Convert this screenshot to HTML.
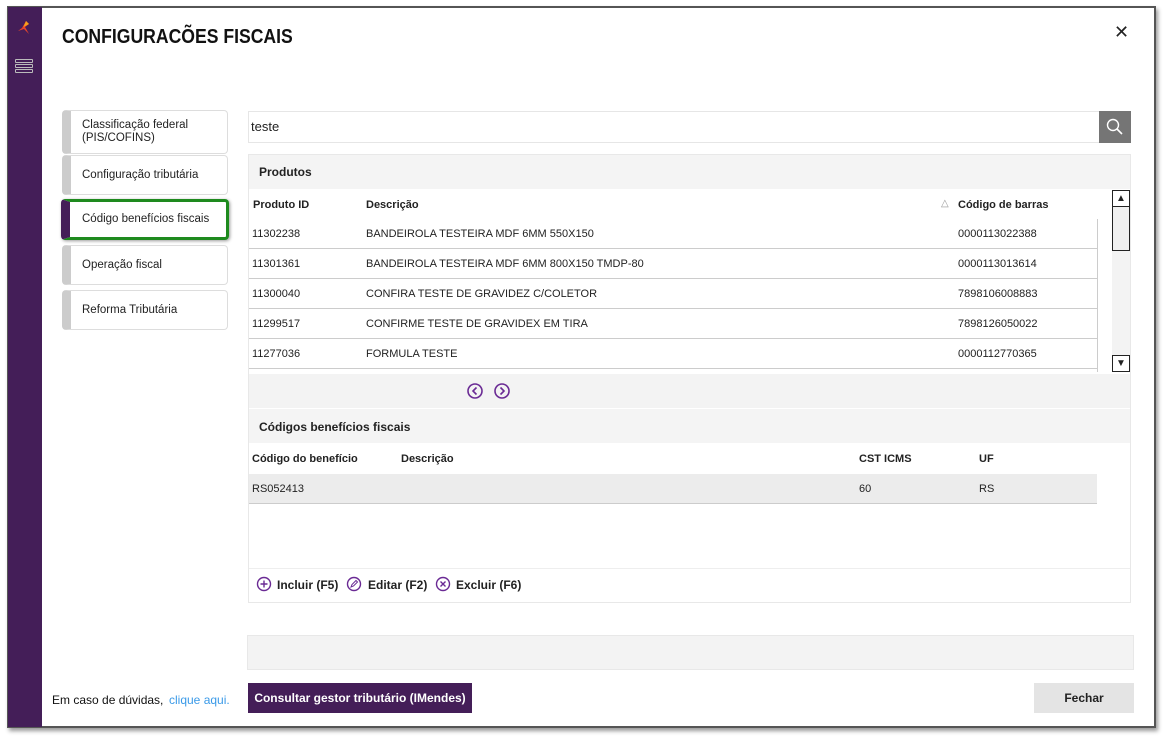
<!DOCTYPE html>
<html><head><meta charset="utf-8"><style>
*{margin:0;padding:0;box-sizing:border-box}
body{width:1163px;height:737px;background:#fff;font-family:"Liberation Sans",Arial,sans-serif;position:relative;overflow:hidden;font-size:12px;color:#222}
.a{position:absolute}
.win{left:7px;top:6px;width:1149px;height:722px;border:2px solid #555;box-shadow:2px 3px 4px #999;background:#fff}
.side{left:8px;top:7px;width:34px;height:720px;background:#441e58}
.tab{position:absolute;left:62px;width:166px;height:40px;border:1px solid #ddd;border-radius:4px;border-left:9px solid #ccc;padding-left:11px;display:flex;align-items:center;font-size:11.5px;color:#222;line-height:13px}
.row{position:absolute;left:249px;width:848px;height:30px;border-bottom:1px solid #ccc;font-size:11px;line-height:31px}
.row span{position:absolute}
.b{font-weight:bold}
.bar{position:absolute;left:15px;width:18px;height:4px;border:1px solid #bbb;border-radius:1px}
</style></head><body>
<div class="a win"></div>
<div class="a side"></div>
<svg class="a" style="left:16px;top:20px" width="16" height="16" viewBox="0 0 16 16"><path d="M10 1 L6 8 L2 11 L8 9 L13 14 L9 7 L13 4Z" fill="#e8452b"/><path d="M10 1 L7.5 7 L13 4Z" fill="#f7a21b"/></svg>
<div class="bar" style="top:59px"></div>
<div class="bar" style="top:64px"></div>
<div class="bar" style="top:69px"></div>
<div class="a b" style="left:62px;top:26px;font-size:20px;color:#111;transform:scaleX(.88);transform-origin:left">CONFIGURACÕES FISCAIS</div>
<div class="a" style="left:1114px;top:22px;font-size:18px;color:#222">✕</div>

<div class="tab" style="top:110px;height:44px">Classificação federal<br>(PIS/COFINS)</div>
<div class="tab" style="top:155px">Configuração tributária</div>
<div class="tab" style="top:199px;height:41px;border:3px solid #1e8a1e;border-left:9px solid #441e58;left:61px;width:168px;padding-left:12px;box-shadow:1px 1px 3px #999">Código benefícios fiscais</div>
<div class="tab" style="top:245px">Operação fiscal</div>
<div class="tab" style="top:290px">Reforma Tributária</div>

<div class="a" style="left:248px;top:111px;width:852px;height:32px;border:1px solid #e6e6e6;padding:7px 2px;font-size:13px">teste</div>
<div class="a" style="left:1099px;top:111px;width:32px;height:32px;background:#757575"></div>
<svg class="a" style="left:1105px;top:117px" width="20" height="20" viewBox="0 0 20 20"><circle cx="8" cy="8" r="5.5" fill="none" stroke="#fff" stroke-width="1.4"/><path d="M12 12 L17 17" stroke="#fff" stroke-width="1.6"/></svg>

<div class="a" style="left:248px;top:154px;width:883px;height:449px;border:1px solid #e8e8e8"></div>
<div class="a b" style="left:249px;top:155px;width:881px;height:34px;background:#f4f4f4;padding:10px 10px;font-size:12px">Produtos</div>
<div class="a b" style="left:253px;top:199px;font-size:11px">Produto ID</div>
<div class="a b" style="left:366px;top:199px;font-size:11px">Descrição</div>
<div class="a" style="left:941px;top:198px;font-size:10px;color:#999">△</div>
<div class="a b" style="left:958px;top:199px;font-size:11px">Código de barras</div>
<div class="a" style="left:1097px;top:219px;width:1px;height:153px;background:#ccc"></div>
<div class="row" style="top:219px"><span style="left:3px">11302238</span><span style="left:117px">BANDEIROLA TESTEIRA MDF 6MM 550X150</span><span style="left:709px">0000113022388</span></div>
<div class="row" style="top:249px"><span style="left:3px">11301361</span><span style="left:117px">BANDEIROLA TESTEIRA MDF 6MM 800X150 TMDP-80</span><span style="left:709px">0000113013614</span></div>
<div class="row" style="top:279px"><span style="left:3px">11300040</span><span style="left:117px">CONFIRA TESTE DE GRAVIDEZ C/COLETOR</span><span style="left:709px">7898106008883</span></div>
<div class="row" style="top:309px"><span style="left:3px">11299517</span><span style="left:117px">CONFIRME TESTE DE GRAVIDEX EM TIRA</span><span style="left:709px">7898126050022</span></div>
<div class="row" style="top:339px"><span style="left:3px">11277036</span><span style="left:117px">FORMULA TESTE</span><span style="left:709px">0000112770365</span></div>
<div class="a" style="left:1112px;top:190px;width:18px;height:182px;background:#f3f3f3"></div>
<div class="a" style="left:1112px;top:190px;width:18px;height:17px;border:1px solid #222;background:#fff;font-size:10px;text-align:center;line-height:15px">▲</div>
<div class="a" style="left:1112px;top:206px;width:18px;height:45px;border:1px solid #222;background:#f0f0f0"></div>
<div class="a" style="left:1112px;top:355px;width:18px;height:17px;border:1px solid #222;background:#fff;font-size:10px;text-align:center;line-height:15px">▼</div>
<div class="a" style="left:249px;top:374px;width:881px;height:34px;background:#f3f3f3"></div>
<svg class="a" style="left:466px;top:382px" width="46" height="18" viewBox="0 0 46 18"><circle cx="9" cy="9" r="7" fill="none" stroke="#6a2a94" stroke-width="1.6"/><path d="M10.5 5.5 L7 9 L10.5 12.5" fill="none" stroke="#6a2a94" stroke-width="1.6"/><circle cx="36" cy="9" r="7" fill="none" stroke="#6a2a94" stroke-width="1.6"/><path d="M34.5 5.5 L38 9 L34.5 12.5" fill="none" stroke="#6a2a94" stroke-width="1.6"/></svg>

<div class="a b" style="left:249px;top:409px;width:881px;height:34px;background:#f4f4f4;padding:11px 10px;font-size:12px">Códigos benefícios fiscais</div>
<div class="a b" style="left:252px;top:453px;font-size:11px">Código do benefício</div>
<div class="a b" style="left:401px;top:453px;font-size:11px">Descrição</div>
<div class="a b" style="left:859px;top:453px;font-size:11px">CST ICMS</div>
<div class="a b" style="left:979px;top:453px;font-size:11px">UF</div>
<div class="a" style="left:249px;top:474px;width:848px;height:30px;background:#ececec;border-bottom:1px solid #ccc;font-size:11px;line-height:30px"><span class="a" style="left:3px">RS052413</span><span class="a" style="left:610px">60</span><span class="a" style="left:730px">RS</span></div>
<div class="a" style="left:249px;top:568px;width:881px;height:1px;background:#eee"></div>
<svg class="a" style="left:256px;top:576px" width="270" height="18" viewBox="0 0 270 18"><circle cx="8" cy="8" r="6.5" fill="none" stroke="#6a2a94" stroke-width="1.4"/><path d="M8 4.5V11.5M4.5 8H11.5" stroke="#6a2a94" stroke-width="1.4"/><circle cx="98" cy="8" r="6.5" fill="none" stroke="#6a2a94" stroke-width="1.4"/><path d="M95 11 L96 8.5 L100 4.5 L101.5 6 L97.5 10Z" fill="none" stroke="#6a2a94" stroke-width="1"/><circle cx="187" cy="8" r="6.5" fill="none" stroke="#6a2a94" stroke-width="1.4"/><path d="M184.5 5.5L189.5 10.5M189.5 5.5L184.5 10.5" stroke="#6a2a94" stroke-width="1.4"/></svg>
<div class="a b" style="left:277px;top:578px;font-size:12px">Incluir (F5)</div>
<div class="a b" style="left:368px;top:578px;font-size:12px">Editar (F2)</div>
<div class="a b" style="left:456px;top:578px;font-size:12px">Excluir (F6)</div>

<div class="a" style="left:247px;top:635px;width:887px;height:35px;background:#f3f3f3;border:1px solid #e8e8e8"></div>
<div class="a" style="left:52px;top:693px;font-size:12px;color:#111">Em caso de dúvidas,</div>
<div class="a" style="left:169px;top:693px;font-size:12px;color:#3a9ae8">clique aqui.</div>
<div class="a b" style="left:248px;top:683px;width:224px;height:30px;background:#441e58;color:#fff;font-size:12px;text-align:center;line-height:30px">Consultar gestor tributário (IMendes)</div>
<div class="a b" style="left:1034px;top:683px;width:100px;height:30px;background:#e4e4e4;font-size:12px;text-align:center;line-height:30px">Fechar</div>
</body></html>
